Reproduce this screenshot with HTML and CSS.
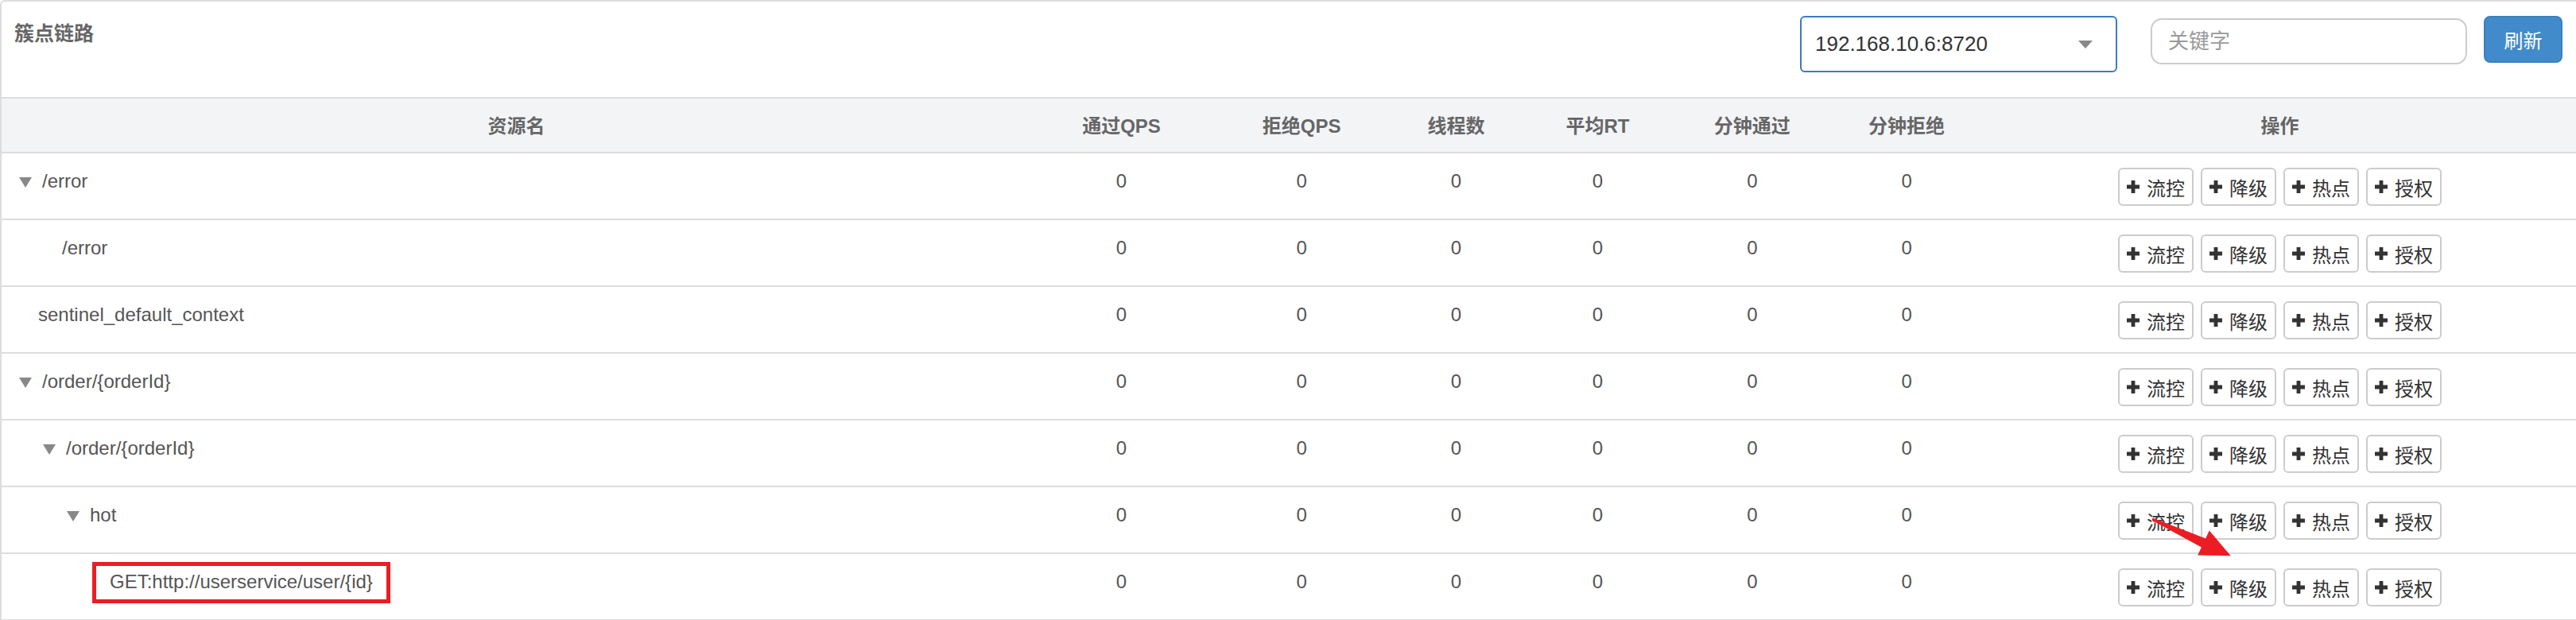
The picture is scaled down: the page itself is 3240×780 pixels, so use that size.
FILE: index.html
```html
<!DOCTYPE html>
<html>
  <head>
    <title>簇点链路</title>
    <meta charset="UTF-8">
    <meta name="viewport" content="width=device-width, initial-scale=1.0">
    <link rel="stylesheet" href="styles.css">
    <script>
      //the resource tree, already flattened in display order
      let resources = [
        {name: "/error", level: 0, hasChildren: true},
        {name: "/error", level: 1, hasChildren: false},
        {name: "sentinel_default_context", level: 0, hasChildren: false},
        {name: "/order/{orderId}", level: 0, hasChildren: true},
        {name: "/order/{orderId}", level: 1, hasChildren: true},
        {name: "hot", level: 2, hasChildren: true},
        {name: "GET:http://userservice/user/{id}", level: 3, hasChildren: false, marked: true}
      ];
      let actions = ["流控", "降级", "热点", "授权"];

      function viewResources(list)
      {
        let htmlString = "";

        list.forEach(res => {
          let icon = res.hasChildren ? `<span class="caret"></span>` : `<span class="leaf"></span>`;
          let name = res.marked ? `<span class="marked">${res.name}</span>` : res.name;

          htmlString += `<tr>
            <td class="name" style="padding-left: ${22 + res.level * 30}px">${icon}${name}</td>
            <td>0</td>
            <td>0</td>
            <td>0</td>
            <td>0</td>
            <td>0</td>
            <td>0</td>
            <td><div class="ops">`;

          actions.forEach(action => {
            htmlString += `<button class="op-btn"><svg class="plus" viewBox="0 0 16 16"><path d="M5.6 0h4.8v5.6H16v4.8h-5.6V16H5.6v-5.6H0V5.6h5.6z"/></svg>${action}</button>`;
          });

          htmlString += `</div></td>
          </tr>`;
        });

        document.getElementById("resources").innerHTML = htmlString;
      }
    </script>
  </head>
  <body onload="viewResources(resources)">
    <div class="page">
      <div class="panel">
        <div class="toolbar">
          <div class="title">簇点链路</div>
          <div class="machine">
            <span>192.168.10.6:8720</span>
            <span class="select-caret"></span>
          </div>
          <input type="text" class="keyword" placeholder="关键字"/>
          <button class="refresh">刷新</button>
        </div>

        <table class="res-table">
          <colgroup>
            <col class="w40">
            <col class="w7">
            <col class="w7">
            <col class="w5">
            <col class="w6">
            <col class="w6">
            <col class="w6">
            <col class="w23">
          </colgroup>
          <thead>
            <tr>
              <th>资源名</th>
              <th>通过QPS</th>
              <th>拒绝QPS</th>
              <th>线程数</th>
              <th>平均RT</th>
              <th>分钟通过</th>
              <th>分钟拒绝</th>
              <th>操作</th>
            </tr>
          </thead>
          <tbody id="resources"></tbody>
        </table>
      </div>

      <svg class="arrow" viewBox="0 0 120 70">
        <polygon points="7.6,11.6 74.1,37.6 78.8,27.6 105.8,59.3 64.2,58.4 68.9,48.4 6.4,14.4"/>
      </svg>
    </div>
  </body>
</html>
```

FILE: styles.css
```css
*{
   box-sizing: border-box;
}

body{
   margin: 0;
   overflow: hidden;
   background: white;
   font-family: "Liberation Sans", "Noto Sans CJK SC", sans-serif;
   font-size: 24px;
   color: #555;
}

.page{
   position: relative;
   width: 3240px;
   height: 780px;
}

.panel{
   border-top: 2px solid #dddddd;
   border-left: 2px solid #dddddd;
   border-top-left-radius: 6px;
}

/* top bar */
.toolbar{
   display: flex;
   align-items: flex-start;
   height: 120px;
   padding: 18px 17px 0 16px;
}

.title{
   flex: 1;
   margin-top: 5px;
   font-size: 25px;
   font-weight: bold;
   line-height: 34px;
   color: #666;
}

.machine{
   display: flex;
   align-items: center;
   justify-content: space-between;
   width: 399px;
   height: 71px;
   padding: 0 29px 0 17px;
   border: 2px solid #3b7bbf;
   border-radius: 6px;
   font-size: 26px;
   color: #333;
}

.select-caret{
   width: 0;
   height: 0;
   border-left: 9.5px solid transparent;
   border-right: 9.5px solid transparent;
   border-top: 10px solid #888;
}

.keyword{
   width: 398px;
   height: 58px;
   margin: 3px 0 0 42px;
   padding: 0 20px;
   border: 2px solid #cccccc;
   border-radius: 14px;
   font-family: inherit;
   font-size: 26px;
   color: #333;
   outline: none;
}

.keyword::placeholder{
   color: #9a9a9a;
}

.refresh{
   width: 99px;
   height: 59px;
   margin-left: 21px;
   border: 2px solid #3a80c0;
   border-radius: 8px;
   background: #428bca;
   color: white;
   font-family: inherit;
   font-size: 24px;
}

/* table */
.res-table{
   width: 100%;
   table-layout: fixed;
   border-collapse: collapse;
}

.w40{ width: 40%; }
.w23{ width: 23%; }
.w7{ width: 7%; }
.w6{ width: 6%; }
.w5{ width: 5%; }

th{
   background: #f3f4f6;
   border-top: 2px solid #dddddd;
   border-bottom: 2px solid #dddddd;
   padding: 18px 8px 15px;
   line-height: 34px;
   font-weight: bold;
   color: #666;
   text-align: center;
}

td{
   border-bottom: 2px solid #dddddd;
   padding: 18px 8px 16px;
   height: 84px;
   line-height: 34px;
   vertical-align: top;
   text-align: center;
   white-space: nowrap;
}

td.name{
   text-align: left;
}

.caret{
   display: inline-block;
   width: 0;
   height: 0;
   margin-right: 13px;
   border-left: 8.5px solid transparent;
   border-right: 8.5px solid transparent;
   border-top: 13px solid #888;
   vertical-align: middle;
}

.leaf{
   display: inline-block;
   width: 24px;
}

.marked{
   margin-left: -22px;
   padding: 6px 17px 9px;
   border: 5px solid #ec1c24;
}

.ops{
   display: flex;
   justify-content: center;
   gap: 9px;
}

.op-btn{
   display: inline-flex;
   align-items: center;
   gap: 9px;
   height: 48px;
   padding: 0 9px;
   border: 2px solid #cccccc;
   border-radius: 6px;
   background: white;
   font-family: inherit;
   font-size: 24px;
   color: #333;
}

.plus{
   width: 16px;
   height: 16px;
   fill: #333;
}

/* annotation drawn over the table */
.arrow{
   position: absolute;
   left: 2700px;
   top: 640px;
   width: 120px;
   height: 70px;
   fill: #ec1c24;
}
```
